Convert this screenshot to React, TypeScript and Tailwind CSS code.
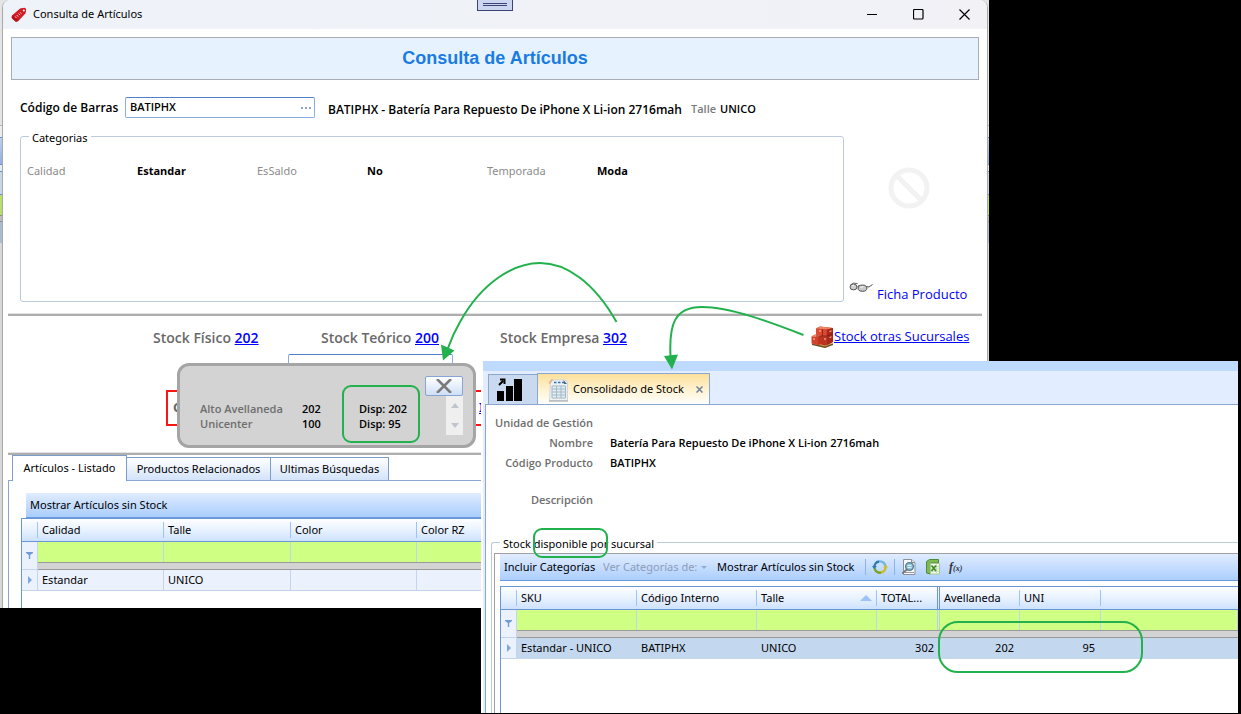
import React from 'react';

const HEADER_BG = 'bg-linear-to-b from-white via-[#e9f2ff] to-[#cbe0fe]';
const STRONG = "font-['Open_Sans',sans-serif] font-semibold";

function TagIcon() {
  return (
    <svg width="16" height="16" viewBox="0 0 16 16" aria-hidden="true">
      <path d="M1 8.5 8.2 2.200Q9 1.500 10 1.300L13.500.8Q15.200 1.200 15.200 2.600L14.600 6.200 7.600 13.700Q6 15.200 4.500 14.600L1.200 11.800Q0 10 1 8.500z" fill="#d01c24" />
      <path d="M.6 10.500 4.800 14.700 7.500 13.700 2 8z" fill="#b51219" />
      <circle cx="12.8" cy="3.400" r="1" fill="#fff" />
      <path d="m4 9.400 1.400 1.600M5.800 8 7.200 9.600M7.600 6.500l1.400 1.600M9.200 5.300l1.200 1.400" stroke="#ffd9d9" strokeWidth="0.9" />
    </svg>
  );
}

function GlassesIcon() {
  return (
    <svg width="24" height="12" viewBox="0 0 24 12" aria-hidden="true">
      <path d="M1.500 3Q4 0 8.500 1.500M8.500 4.500q1-1.500 2.500-.5" fill="none" stroke="#666" />
      <path d="M17.500 4.500 20 5l3.500-2.500" fill="none" stroke="#555" />
      <ellipse cx="4.500" cy="5" rx="3.500" ry="2.900" fill="#d0d0d0" stroke="#555" />
      <ellipse cx="13.500" cy="6.200" rx="4.400" ry="3.100" fill="#c9c9c9" stroke="#4a4a4a" />
      <path d="M3 4l2-1M11.500 5.500l3-1" stroke="#fff" />
    </svg>
  );
}

function PalletIcon() {
  return (
    <svg width="23" height="22" viewBox="0 0 23 22" aria-hidden="true">
      <path d="M1 17.500 9 16l13 1.500-8 4z" fill="#c79a57" />
      <path d="M1 17.500v1.500l13 3v-1.500zM14 20.500v1.500l8-3v-1.500z" fill="#6b4a22" />
      <path d="M5 2.500 9 .5l13 1.500v14l-8 3.500L5 17z" fill="#b5301c" />
      <path d="M5 2.500 9 .5l13 1.500-6 1.500z" fill="#ef8264" />
      <path d="M5 3h10.500v7.500H5z" fill="#de4a30" />
      <path d="M16 3.500 22 2v14l-6 3z" fill="#a8281a" />
      <path d="M.5 10.500 4 8.500l7 1v8l-4 1.500-6.500-1.500z" fill="#d2432b" />
      <path d="M.5 10.500 4 8.500l7 1-4 1.500z" fill="#f08a6c" />
      <path d="M7 11l4-1.500v8L7 19zM11.500 11 16 10.500v8.200L11.500 18z" fill="#be3420" />
      <path d="M5 10h11l6-2M11.500 3v7" stroke="#7d1c10" strokeWidth="0.8" fill="none" />
      <path d="M2 13h2M18.500 5.500l2-.6M18.500 11.500l2-.6M8 5h2M13 13h2" stroke="#f7c9b8" />
    </svg>
  );
}

function ChartIcon() {
  return (
    <svg width="26" height="24" viewBox="0 0 26 24" aria-hidden="true">
      <path d="M0 13h7v10H0zM9 8h7v15H9zM17 1h8v22h-8z" fill="#000" />
      <path d="M2 7 6 3M3 1.500h4.500V6" fill="none" stroke="#000" strokeWidth="2" />
    </svg>
  );
}

function ReportIcon() {
  return (
    <svg width="21" height="24" viewBox="0 0 21 24" aria-hidden="true">
      <path d="M2.500 2H18l1.500 3v17.500h-18z" fill="#eef0f2" stroke="#d3d6d9" />
      <path d="M1 23h19" stroke="#b4b9bd" strokeWidth="1.500" />
      <path d="M.5 5 4 .8 5 2 2 6z" fill="#e2b28a" />
      <path d="M6 4.500h2.500M10 4.500h2.500M14 4.500h2" stroke="#2a78b8" strokeWidth="1.600" />
      <path d="M15.500 2 19 6h-3z" fill="#567" />
      <path d="M4 8h13.500v12H4zM4 11h13.500M4 14h13.500M4 17h13.500M8.500 8v12M13 8v12" fill="#e3edf4" stroke="#a3b9c8" />
    </svg>
  );
}

function RefreshIcon() {
  return (
    <svg width="16" height="16" viewBox="0 0 16 16" aria-hidden="true" fill="none" strokeWidth="2.400">
      <path d="M2.400 8.500A5.600 5.600 0 0 1 7 2.500" stroke="#2b78b4" />
      <path d="M7 2.500A5.600 5.600 0 0 1 13.600 8" stroke="#74b4e0" />
      <path d="M13.600 7.500A5.600 5.600 0 0 1 8.500 13.600" stroke="#c9bd2c" />
      <path d="M9 13.600A5.600 5.600 0 0 1 2.500 9" stroke="#7ba428" />
      <path d="m0 7 4.800 0-2.600 3z" fill="#2b78b4" />
      <path d="m11.200 8.500 4.800 0-2.400-3z" fill="#c9bd2c" />
    </svg>
  );
}

function PreviewIcon() {
  return (
    <svg width="16" height="16" viewBox="0 0 16 16" aria-hidden="true">
      <path d="M2.500.5h8l3.500 3v12H2.500z" fill="#f7f8f9" stroke="#8a9095" />
      <path d="M10.500.5v3H14" fill="#dde1e4" stroke="#8a9095" />
      <path d="M4 13.500h9" stroke="#999" />
      <circle cx="8.500" cy="7.500" r="3.900" fill="#8cc3dc" stroke="#56788a" strokeWidth="1.300" />
      <path d="M6.500 6.500h4M6.500 8.500h4" stroke="#d9f0f8" />
      <path d="m5.800 10.500-4.500 4" stroke="#777" strokeWidth="2" />
    </svg>
  );
}

function ExcelIcon() {
  return (
    <svg width="16" height="16" viewBox="0 0 16 16" aria-hidden="true">
      <path d="M1.500 2.500 4.500.5h9V4H5.500v11l-4-1z" fill="#7fb956" stroke="#4c8a35" />
      <path d="M5.500 4.500h9v10.500h-9z" fill="#f4faef" stroke="#a6cb8e" />
      <path d="M11.500 5v10M6 7.500h8M6 10h8M6 12.500h8" stroke="#c9dfbc" />
      <path d="m6.500 6.500 4.500 5.500M11 6.500l-4.500 5.500" stroke="#3f8a2b" strokeWidth="1.800" />
    </svg>
  );
}

function FilterMark() {
  return (
    <svg className="mx-auto" width="7" height="7" viewBox="0 0 7 7" aria-hidden="true">
      <path d="M0 0h7v1L4.200 3v4H2.800V3L0 1z" fill="#6f9bd8" />
    </svg>
  );
}

function RowMark() {
  return (
    <svg className="mx-auto" width="4" height="8" viewBox="0 0 4 8" aria-hidden="true">
      <path d="M0 0v8l4-4z" fill="#7fa6dd" />
    </svg>
  );
}

interface Column {
  title: string;
  width: string;
  value: string;
  numeric?: boolean;
  sorted?: boolean;
  fixedEdge?: boolean;
}

interface GridProps {
  label: string;
  columns: Column[];
  selected?: boolean;
}

function DataGrid({ label, columns, selected }: GridProps) {
  const rowBg = selected ? 'bg-[#c3d8ee]' : 'bg-[#ebf2fe]';
  const cellLine = selected ? '' : 'border-r border-b border-[#c3d5ee]';

  return (
    <table aria-label={label} className="w-full table-fixed border-separate border-spacing-0 text-left text-[11px]">
      <colgroup>
        <col className="w-4" />
        {columns.map((c, i) => (
          <col key={i} className={c.width} />
        ))}
      </colgroup>
      <thead>
        <tr className={HEADER_BG}>
          <th className="h-6 border-y border-[#6a97d3] p-0">
            <div className="ml-auto h-4 border-r border-[#9cc4f8]" />
          </th>
          {columns.map((c, i) => (
            <th key={i} className="h-6 border-y border-[#6a97d3] p-0 font-normal">
              <div
                className={`flex items-center justify-between pl-1 whitespace-nowrap ${
                  c.fixedEdge
                    ? 'h-[22px] border-r-3 border-double border-[#6a97d3]'
                    : c.title
                      ? 'h-4 border-r border-[#9cc4f8]'
                      : 'h-4'
                }`}
              >
                {c.title}
                {c.sorted && (
                  <svg className="mr-1" width="12" height="6" viewBox="0 0 12 6" aria-hidden="true">
                    <path d="M0 6h12L6 0z" fill="#9cc4f8" />
                  </svg>
                )}
              </div>
            </th>
          ))}
        </tr>
      </thead>
      <tbody>
        <tr>
          <td rowSpan={2} className="border-r border-b border-[#c3d5ee] bg-[#ebf2fe] p-0">
            <FilterMark />
          </td>
          {columns.map((c, i) => (
            <td
              key={i}
              className={`h-5 bg-[#cfff83] p-0 ${c.fixedEdge ? 'border-r-3 border-double border-[#b9cfe0]' : 'border-r border-[#c3d5ee]'}`}
            >
              <input aria-label={`Filtrar ${c.title}`} className="block h-5 w-full bg-transparent px-1 outline-none" />
            </td>
          ))}
        </tr>
        <tr>
          <td colSpan={columns.length} className="h-2 border-y border-[#9a9a9a] bg-[#d3d3d3] p-0" />
        </tr>
        <tr>
          <td className="h-[21px] border-r border-b border-[#c3d5ee] bg-[#ebf2fe] p-0">
            <RowMark />
          </td>
          {columns.map((c, i) => (
            <td key={i} className={`h-[21px] p-0 pl-1 ${rowBg} ${cellLine} ${c.numeric ? 'pr-1.5 text-right' : ''}`}>
              {c.value}
            </td>
          ))}
        </tr>
      </tbody>
    </table>
  );
}

// Slice of the application that shows around the edges of the dialog
function AppBehind() {
  return (
    <div className="absolute inset-0 flex flex-col bg-[#d8d8d8]">
      <div className="h-[125px] bg-[#e4e4e4]" />
      <div className="h-3 border-t border-[#b5b5b5] bg-[#ececec]" />
      <div className="h-7 border-y border-[#6a8fc9] bg-linear-to-b from-[#bcd0ee] to-[#8fb0e0]" />
      <div className="h-1.5 bg-[#e6eaf2]" />
      <div className="h-6 border-y border-[#6a8fc9] bg-[#c9d6ea]" />
      <div className="h-5 bg-[#b5e06c]" />
      <div className="h-[7px] border-y border-[#8e8e8e] bg-[#bdbdbd]" />
      <div className="h-[21px] bg-[#a8bdd4]" />
    </div>
  );
}

function Divider() {
  return <div className="h-[3px] border-t border-[#e3e3e3] bg-[#aeaeae]" />;
}

const CATEGORIES = [
  ['Calidad', 'Estandar'],
  ['EsSaldo', 'No'],
  ['Temporada', 'Moda'],
];

const STOCKS = [
  ['Stock Físico', '202'],
  ['Stock Teórico', '200'],
  ['Stock Empresa', '302'],
];

const ARTICLE_COLUMNS: Column[] = [
  { title: 'Calidad', width: 'w-[126px]', value: 'Estandar' },
  { title: 'Talle', width: 'w-[127px]', value: 'UNICO' },
  { title: 'Color', width: 'w-[126px]', value: '' },
  { title: 'Color RZ', width: 'w-[126px]', value: '' },
  { title: '', width: 'w-auto', value: '' },
];

const STOCK_COLUMNS: Column[] = [
  { title: 'SKU', width: 'w-[120px]', value: 'Estandar - UNICO' },
  { title: 'Código Interno', width: 'w-[120px]', value: 'BATIPHX' },
  { title: 'Talle', width: 'w-[120px]', value: 'UNICO', sorted: true },
  { title: 'TOTAL...', width: 'w-[63px]', value: '302', numeric: true, fixedEdge: true },
  { title: 'Avellaneda', width: 'w-20', value: '202', numeric: true },
  { title: 'UNI', width: 'w-[81px]', value: '95', numeric: true },
  { title: '', width: 'w-auto', value: '' },
];

function ArticleWindow() {
  return (
    <section className="absolute top-0 right-[252px] left-0 h-[608px] overflow-hidden">
      <AppBehind />
      <div className="relative mr-px ml-0.5 flex h-full flex-col rounded-t-lg border-x border-[#a9a9a9] bg-white">
        <header className="flex h-[29px] shrink-0 items-center rounded-t-lg bg-linear-to-r from-[#eef3f9] to-[#f1f1f6] pl-2">
          <TagIcon />
          <h1 className="ml-1.5 flex-1">Consulta de Artículos</h1>
          <button aria-label="Minimizar" className="flex h-full w-[46px] items-center justify-center">
            <svg width="11" height="11" viewBox="0 0 11 11"><path d="M0 5.500h10" stroke="#000" /></svg>
          </button>
          <button aria-label="Maximizar" className="flex h-full w-[46px] items-center justify-center">
            <svg width="11" height="11" viewBox="0 0 11 11"><rect x="0.500" y="0.500" width="9.500" height="9.500" rx="1" fill="none" stroke="#000" strokeWidth="1.200" /></svg>
          </button>
          <button aria-label="Cerrar" className="flex h-full w-[46px] items-center justify-center">
            <svg width="11" height="11" viewBox="0 0 11 11"><path d="m.5.500 10 10M10.500.5l-10 10" stroke="#000" strokeWidth="1.200" /></svg>
          </button>
        </header>

        <div className="flex-1 px-[5px] pt-2">
          <h2 className="mx-[3px] flex h-[43px] items-center justify-center border border-[#a9adb1] bg-[#e6f3ff] font-['Liberation_Sans',sans-serif] text-[18px] font-bold text-[#1a7be3]">
            Consulta de Artículos
          </h2>

          <div className={`mt-[17px] flex h-[21px] items-center pl-3 whitespace-nowrap ${STRONG}`}>
            <label htmlFor="codigo" className="w-[105px] text-[12px]">Código de Barras</label>
            <div className="flex h-[21px] w-[190px] items-center rounded-xs border border-[#86ace4] border-t-[#4f7fc8] bg-white">
              <input id="codigo" defaultValue="BATIPHX" className="min-w-0 flex-1 px-1 outline-none" />
              <button aria-label="Buscar" className="flex w-4 justify-center">
                <svg width="11" height="2" viewBox="0 0 11 2"><path d="M0 0h2v2H0zM4 0h2v2H4zM8 0h2v2H8z" fill="#8ea3c6" /></svg>
              </button>
            </div>
            <span className="mt-1 ml-[13px] w-[363px] text-[12px]">BATIPHX - Batería Para Repuesto De iPhone X Li-ion 2716mah</span>
            <span className="mt-1 text-[#7a7a7a]">Talle</span>
            <span className="mt-1 ml-1">UNICO</span>
          </div>

          <div className="mt-2 flex pl-3">
            <fieldset className="h-[176px] min-w-0 flex-1 rounded-[3px] border border-[#bccbdc]">
              <legend className="ml-2 px-[3px] pt-1 leading-4">Categorias</legend>
              <dl className="mt-[17px] grid grid-cols-[110px_120px_110px_120px_110px_1fr] pl-1.5 leading-4">
                {CATEGORIES.map(([name, value]) => (
                  <React.Fragment key={name}>
                    <dt className="text-[#8b8b8b]">{name}</dt>
                    <dd className="font-['Open_Sans',sans-serif] font-bold">{value}</dd>
                  </React.Fragment>
                ))}
              </dl>
            </fieldset>
            <aside className="flex h-[176px] w-[138px] flex-col pt-[41px]">
              <svg className="mr-[52px] ml-auto shrink-0" width="42" height="42" viewBox="0 0 42 42" aria-hidden="true">
                <circle cx="21" cy="21" r="18" fill="none" stroke="#f2f2f2" strokeWidth="5" />
                <path d="m8.500 8.500 25 25" stroke="#f2f2f2" strokeWidth="5" />
              </svg>
              <a href="#ficha" className="mt-[73px] flex pl-[5px] font-['Open_Sans',sans-serif] text-[13px] leading-4 whitespace-nowrap text-[#0000ff]">
                <GlassesIcon />
                <span className="mt-1 ml-1">Ficha Producto</span>
              </a>
            </aside>
          </div>

          <div className="mt-[11px]">
            <Divider />
          </div>

          <div className="grid h-[38px] grid-cols-[168px_179px_311px_1fr] items-center pt-1 pl-[145px] font-['Open_Sans',sans-serif] whitespace-nowrap">
            {STOCKS.map(([name, value]) => (
              <p key={name} className="text-[14px] font-semibold text-[#696969]">
                {name}{' '}
                <a href="#stock" className="text-[#0000ff] underline">{value}</a>
              </p>
            ))}
            <a href="#sucursales" className="flex items-center text-[13px] text-[#0000ff] underline">
              <PalletIcon />
              Stock otras Sucursales
            </a>
          </div>

          <input aria-label="Lista" className="ml-[280px] block h-6 w-[165px] rounded-xs border border-[#86ace4] border-t-[#4f7fc8]" />

          <div className="mt-3 ml-[158px] flex h-9 items-center border-2 border-[#ff1414] pl-[5px] text-[13px] font-bold">
            <span className="w-[306px] text-[#696969]">C</span>
            <a href="#otro" className="text-[#0000ff] underline">I</a>
          </div>

          <div className="mt-[26px]">
            <Divider />
          </div>

          <nav className="flex items-end pl-1" role="tablist">
            <button role="tab" aria-selected="true" className="-mb-px h-[26px] w-[115px] border-x border-t border-[#7c9cc9] bg-white">
              Artículos - Listado
            </button>
            <button role="tab" className="h-[23px] w-36 border-t border-r border-[#7c9cc9] bg-linear-to-b from-white to-[#d3e3fa]">
              Productos Relacionados
            </button>
            <button role="tab" className="h-[23px] w-[118px] border-t border-r border-[#7c9cc9] bg-linear-to-b from-white to-[#d3e3fa]">
              Ultimas Búsquedas
            </button>
          </nav>
          <div className="h-40 border-t border-l border-[#8ba7d0] pt-3 pl-3">
            <div className="ml-[5px] flex h-[25px] items-center border-b border-[#6a9bdd] bg-linear-to-b from-[#e0ecff] to-[#a9cdfc] pl-1">
              <button>Mostrar Artículos sin Stock</button>
            </div>
            <div className="h-full border-l border-[#6a97d3]">
              <DataGrid label="Artículos" columns={ARTICLE_COLUMNS} />
            </div>
          </div>
        </div>
      </div>

      <button
        aria-label="Desplegar barra"
        className="absolute top-0 left-[477px] flex h-[11px] w-9 justify-center border border-t-0 border-[#3b4475] bg-[#cdd6f1] pt-[3px]"
      >
        <span className="h-[3px] w-6 border-y border-[#3b4475]" />
      </button>
    </section>
  );
}

function StockPopup() {
  return (
    <section className={`absolute top-[363px] left-[177px] flex h-[85px] w-[299px] rounded-xl border-3 border-[#a5a5a5] bg-[#d3d3d3] leading-[15px] ${STRONG}`}>
      <dl className="grid h-[30px] grid-cols-[102px_57px_1fr] pt-[35px] pl-5 whitespace-nowrap">
        <dt className="text-[#6e6e6e]">Alto Avellaneda</dt>
        <dd>202</dd>
        <dd>Disp: 202</dd>
        <dt className="text-[#6e6e6e]">Unicenter</dt>
        <dd>100</dd>
        <dd>Disp: 95</dd>
      </dl>
      <div className="mt-2.5 mr-2.5 ml-auto flex w-[38px] flex-col items-end">
        <button aria-label="Cerrar detalle" className="flex h-5 w-full items-center justify-center rounded-xs border border-[#86a5d6] bg-linear-to-b from-white to-[#cfdff6]">
          <svg width="16" height="14" viewBox="0 0 16 14"><path d="m1 0 14 14M15 0 1 14" stroke="#7b7b7b" strokeWidth="2.600" /></svg>
        </button>
        <div className="flex h-[39px] w-[17px] flex-col items-center justify-between bg-[#efefef] py-[7px]">
          <svg width="8" height="5" viewBox="0 0 8 5"><path d="M0 5h8L4 0z" fill="#c0c4cc" /></svg>
          <svg width="8" height="5" viewBox="0 0 8 5"><path d="M0 0h8L4 5z" fill="#c0c4cc" /></svg>
        </div>
      </div>
    </section>
  );
}

function FormRow({ label, value }: { label: string; value?: string }) {
  return (
    <div className={`flex h-5 items-center whitespace-nowrap ${STRONG}`}>
      <dt className="w-[107px] text-right text-[#6e6e6e]">{label}</dt>
      <dd className="ml-[17px]">{value}</dd>
    </div>
  );
}

function StockWindow() {
  return (
    <section className="absolute top-[361px] right-[3px] bottom-px left-[481px] flex min-h-[352px] flex-col bg-white pl-0.5">
      <div className="h-2.5 shrink-0 bg-[#bedaff]" />
      <div className="flex flex-1 flex-col overflow-hidden bg-[#e2eeff] pl-0.5">
        <nav className="flex shrink-0 items-end pt-0.5 pl-[3px]" role="tablist">
          <button role="tab" aria-label="Tablero" className="flex h-[30px] w-[49px] items-center border-t border-l border-[#8ba7d0] bg-[#c8d9f0] pl-2">
            <ChartIcon />
          </button>
          <div className="-mb-px flex h-8 w-[173px] items-center border-x border-t border-[#8ba7d0] bg-linear-to-b from-[#fbe09a] via-[#fff2d0] to-white pl-2.5">
            <button role="tab" aria-selected="true" className="flex items-center whitespace-nowrap">
              <ReportIcon />
              <span className="ml-1">Consolidado de Stock</span>
            </button>
            <button aria-label="Cerrar pestaña" className="mr-1.5 ml-auto">
              <svg width="7" height="7" viewBox="0 0 7 7"><path d="m.5.500 6 6M6.500.5l-6 6" stroke="#6f8098" strokeWidth="1.500" /></svg>
            </button>
          </div>
        </nav>

        <div className="flex flex-1 flex-col border-t border-l border-[#8ba7d0] bg-white pt-2">
          <dl>
            <FormRow label="Unidad de Gestión" />
            <FormRow label="Nombre" value="Batería Para Repuesto De iPhone X Li-ion 2716mah" />
            <FormRow label="Código Producto" value="BATIPHX" />
            <div className="mt-[17px]">
              <FormRow label="Descripción" />
            </div>
          </dl>

          <fieldset className="mt-[22px] ml-[5px] min-w-0 flex-1 rounded-tl-[3px] border-t border-l border-[#bccbdc]">
            <legend className="ml-2 px-[3px] pt-1 leading-4">Stock disponible por sucursal</legend>
            <div className="mt-px ml-0.5 h-full border-t border-l border-[#a0a0a0] pl-[5px]">
              <div className="flex h-[27px] items-center border-b border-[#6a9bdd] bg-linear-to-b from-[#e0ecff] to-[#acceff] pl-1 whitespace-nowrap">
                <button className="w-[99px] text-left">Incluir Categorías</button>
                <button className="flex w-[114px] items-center text-[#8d9db5]" disabled>
                  Ver Categorías de:
                  <svg className="ml-1" width="6" height="3" viewBox="0 0 6 3"><path d="M0 0h6L3 3z" fill="#8fabd6" /></svg>
                </button>
                <button className="w-[148px] text-left">Mostrar Artículos sin Stock</button>
                <div className="h-4 border-l border-[#8db5ec]" />
                <button aria-label="Actualizar" className="mx-1.5"><RefreshIcon /></button>
                <div className="h-4 border-l border-[#8db5ec]" />
                <button aria-label="Vista previa" className="ml-1.5"><PreviewIcon /></button>
                <button aria-label="Exportar a Excel" className="ml-2"><ExcelIcon /></button>
                <button aria-label="Fórmula" className="ml-2 font-['Liberation_Serif',serif] text-[12px] font-bold text-[#333] italic">
                  f<span className="text-[8px]">(x)</span>
                </button>
              </div>
              <div className="mt-[5px] h-full border-l border-[#6a97d3]">
                <DataGrid label="Stock por sucursal" columns={STOCK_COLUMNS} selected />
              </div>
            </div>
          </fieldset>
        </div>
      </div>
    </section>
  );
}

// Hand-drawn arrows and boxes laid over both windows
function Annotations() {
  return (
    <svg className="pointer-events-none absolute top-0 left-0" width="1241" height="714" viewBox="0 0 1241 714" fill="none" stroke="#22b14c" strokeWidth="2" aria-hidden="true">
      <path d="M616.500 322C594 282 566 263 540 263S482 282 460 322Q453 334 448 348" />
      <path d="M441 344.500 454.500 350.500 443 360.500z" fill="#22b14c" stroke="none" />
      <path d="M803.500 335C770 322 730 307 702 307S669 325 670.500 356" />
      <path d="M664 356 678 354.500 672 369.500z" fill="#22b14c" stroke="none" />
      <rect x="343" y="386" width="76" height="56" rx="8" />
      <rect x="534" y="529" width="73" height="28" rx="8" />
      <rect x="939" y="622" width="203" height="50" rx="19" />
    </svg>
  );
}

export default function App() {
  return (
    <main className="relative min-h-screen overflow-hidden bg-black font-['Noto_Sans',sans-serif] text-[11px] text-black">
      <ArticleWindow />
      <StockPopup />
      <StockWindow />
      <Annotations />
    </main>
  );
}
